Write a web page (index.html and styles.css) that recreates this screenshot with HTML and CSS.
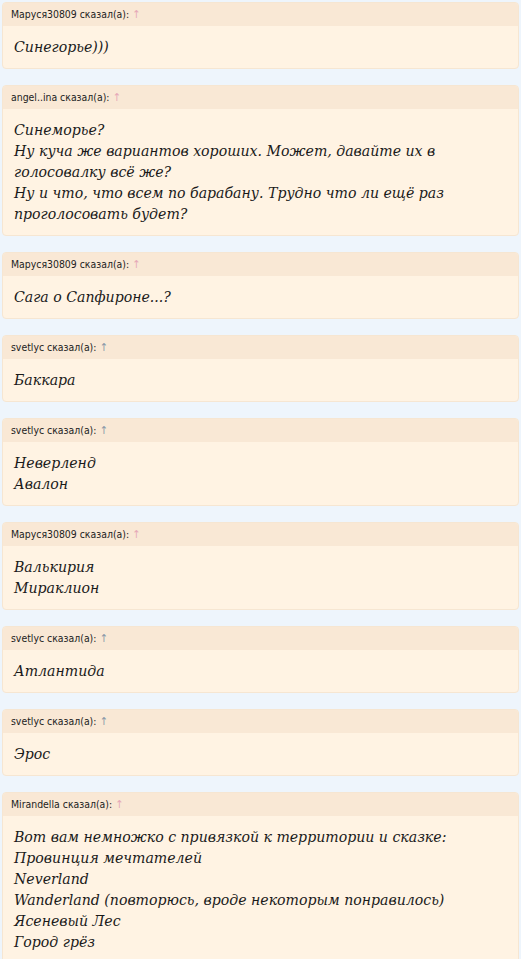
FILE: index.html
```html
<!DOCTYPE html>
<html lang="ru">
<head>
<meta charset="utf-8">
<link rel="stylesheet" href="styles.css">
</head>
<body>
<div class="thread">
  <div class="quote">
    <div class="qhead">Маруся30809 сказал(а): <span class="up pink">↑</span></div>
    <div class="qbody">Синегорье)))</div>
  </div>
  <div class="quote">
    <div class="qhead">angel..ina сказал(а): <span class="up pink">↑</span></div>
    <div class="qbody">Синеморье?<br>Ну куча же вариантов хороших. Может, давайте их в голосовалку всё же?<br>Ну и что, что всем по барабану. Трудно что ли ещё раз проголосовать будет?</div>
  </div>
  <div class="quote">
    <div class="qhead">Маруся30809 сказал(а): <span class="up pink">↑</span></div>
    <div class="qbody">Сага о Сапфироне...?</div>
  </div>
  <div class="quote">
    <div class="qhead">svetlyc сказал(а): <span class="up grey">↑</span></div>
    <div class="qbody">Баккара</div>
  </div>
  <div class="quote">
    <div class="qhead">svetlyc сказал(а): <span class="up grey">↑</span></div>
    <div class="qbody">Неверленд<br>Авалон</div>
  </div>
  <div class="quote">
    <div class="qhead">Маруся30809 сказал(а): <span class="up pink">↑</span></div>
    <div class="qbody">Валькирия<br>Мираклион</div>
  </div>
  <div class="quote">
    <div class="qhead">svetlyc сказал(а): <span class="up grey">↑</span></div>
    <div class="qbody">Атлантида</div>
  </div>
  <div class="quote">
    <div class="qhead">svetlyc сказал(а): <span class="up grey">↑</span></div>
    <div class="qbody">Эрос</div>
  </div>
  <div class="quote">
    <div class="qhead">Mirandella сказал(а): <span class="up pink">↑</span></div>
    <div class="qbody">Вот вам немножко с привязкой к территории и сказке:<br>Провинция мечтателей<br>Neverland<br>Wanderland (повторюсь, вроде некоторым понравилось)<br>Ясеневый Лес<br>Город грёз</div>
  </div>
</div>
</body>
</html>
```
FILE: styles.css
```css
html, body {
  margin: 0;
  padding: 0;
  background: #eef5fc;
}
.thread {
  display: flex;
  flex-direction: column;
  gap: 16px;
  padding: 2px 2px 0 2px;
}
.quote {
  background: #fff3e3;
  border: 1px solid #f6e6d2;
  border-radius: 4px;
  overflow: hidden;
}
.qhead {
  background: #f9e8d5;
  height: 23px;
  line-height: 23px;
  padding: 0 8px;
  font-family: "DejaVu Sans Condensed", "DejaVu Sans", sans-serif;
  font-size: 10.4px;
  color: #222222;
}
.up { font-size: 11px; }
.up.pink { color: #e6a9b8; }
.up.grey { color: #8a98a8; }
.qbody {
  padding: 10px 11px 11px 11px;
  font-family: "DejaVu Serif Condensed", "DejaVu Serif", serif;
  font-style: italic;
  font-size: 15.7px;
  line-height: 21px;
  color: #1a1a1a;
}
```
